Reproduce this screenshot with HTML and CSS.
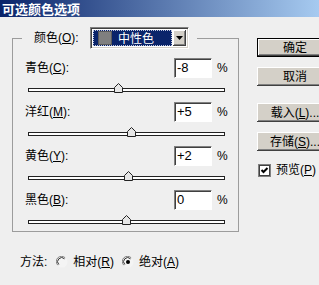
FILE: index.html
```html
<!DOCTYPE html>
<html lang="zh">
<head>
<meta charset="utf-8">
<link rel="stylesheet" href="styles.css">
</head>
<body>
<div class="dialog">
  <div class="titlebar">可选颜色选项</div>
  <div class="main">
    <div class="left">
      <fieldset class="group">
        <legend class="legend">
          <span class="lbl">颜色(<u>O</u>):</span>
          <div class="combo">
            <div class="combo-val"><span class="swatch"></span><span class="combo-text">中性色</span></div>
            <div class="combo-btn"><svg width="7" height="4" viewBox="0 0 7 4"><polygon points="0,0 7,0 3.5,4" fill="#000"/></svg></div>
          </div>
        </legend>
        <div class="rows">
          <div class="row">
            <div class="line"><span class="lbl name">青色(<u>C</u>):</span><div class="num">-8</div><span class="pct">%</span></div>
            <div class="slider"><div class="track"></div><svg class="thumb" style="left:46%" width="9" height="10" viewBox="0 0 9 10"><polygon points="0.5,4.5 4.5,0.5 8.5,4.5 8.5,9.5 0.5,9.5" fill="#e6e6e6" stroke="#222"/></svg></div>
          </div>
          <div class="row">
            <div class="line"><span class="lbl name">洋红(<u>M</u>):</span><div class="num">+5</div><span class="pct">%</span></div>
            <div class="slider"><div class="track"></div><svg class="thumb" style="left:52.5%" width="9" height="10" viewBox="0 0 9 10"><polygon points="0.5,4.5 4.5,0.5 8.5,4.5 8.5,9.5 0.5,9.5" fill="#e6e6e6" stroke="#222"/></svg></div>
          </div>
          <div class="row">
            <div class="line"><span class="lbl name">黄色(<u>Y</u>):</span><div class="num">+2</div><span class="pct">%</span></div>
            <div class="slider"><div class="track"></div><svg class="thumb" style="left:51%" width="9" height="10" viewBox="0 0 9 10"><polygon points="0.5,4.5 4.5,0.5 8.5,4.5 8.5,9.5 0.5,9.5" fill="#e6e6e6" stroke="#222"/></svg></div>
          </div>
          <div class="row">
            <div class="line"><span class="lbl name">黑色(<u>B</u>):</span><div class="num">0</div><span class="pct">%</span></div>
            <div class="slider"><div class="track"></div><svg class="thumb" style="left:50%" width="9" height="10" viewBox="0 0 9 10"><polygon points="0.5,4.5 4.5,0.5 8.5,4.5 8.5,9.5 0.5,9.5" fill="#e6e6e6" stroke="#222"/></svg></div>
          </div>
        </div>
      </fieldset>
      <div class="method">
        <span class="lbl">方法:</span>
        <span class="radio">
          <svg width="12" height="12" viewBox="0 0 12 12"><circle cx="6" cy="6" r="5.5" fill="#f4f4f4"/><path d="M1.8 9.2 A5 5 0 0 1 9.2 1.8" stroke="#808080" fill="none"/><path d="M2.8 8.5 A4 4 0 0 1 8.5 2.8" stroke="#303030" fill="none"/></svg>
          <span class="lbl">相对(<u>R</u>)</span>
        </span>
        <span class="radio">
          <svg width="12" height="12" viewBox="0 0 12 12"><circle cx="6" cy="6" r="5.5" fill="#f4f4f4"/><path d="M1.8 9.2 A5 5 0 0 1 9.2 1.8" stroke="#808080" fill="none"/><path d="M2.8 8.5 A4 4 0 0 1 8.5 2.8" stroke="#303030" fill="none"/><circle cx="6" cy="6" r="2" fill="#000"/></svg>
          <span class="lbl">绝对(<u>A</u>)</span>
        </span>
      </div>
    </div>
    <div class="right">
      <button class="btn default">确定</button>
      <button class="btn b2">取消</button>
      <button class="btn b3">载入(<u>L</u>)...</button>
      <button class="btn b2">存储(<u>S</u>)...</button>
      <div class="check">
        <svg width="13" height="13" viewBox="0 0 13 13"><rect x="0.5" y="0.5" width="12" height="12" fill="#fff" stroke="#808080"/><rect x="1.5" y="1.5" width="10" height="10" fill="none" stroke="#404040"/><polyline points="3.5,6 5.5,8 9.5,4" fill="none" stroke="#000" stroke-width="2"/></svg>
        <span class="lbl">预览(<u>P</u>)</span>
      </div>
    </div>
  </div>
</div>
</body>
</html>
```
FILE: styles.css
```css
* { box-sizing: border-box; }
html, body { margin: 0; padding: 0; }
body {
  width: 319px;
  height: 285px;
  overflow: hidden;
  background: #efefef;
  font-family: "Liberation Sans", "Noto Sans CJK SC", sans-serif;
  font-size: 12px;
  color: #000;
}
.dialog { width: 319px; height: 285px; display: flex; flex-direction: column; }
.titlebar {
  height: 17px;
  background: linear-gradient(to right, #0a246a, #a6caf0);
  color: #fff;
  font-family: "Noto Sans CJK SC", sans-serif;
  font-weight: bold;
  font-size: 13px;
  line-height: 17px;
  padding-left: 2px;
  flex: none;
}
.main { display: flex; flex: 1; }
.left { width: 227px; margin-left: 12px; flex: none; }
.lbl { white-space: nowrap; line-height: 14px; }
.lbl u { text-decoration: underline; }
.group {
  margin: 10px 0 0 0;
  padding: 9px 13px 6px 12px;
  border: 1px solid #9c9c9c;
  min-width: 0;
}
.legend {
  display: flex;
  align-items: center;
  margin-left: -3px;
  padding: 0 8px 0 12px;
  height: 22px;
}
.legend .lbl { width: 56px; }
.combo {
  width: 99px;
  height: 22px;
  display: flex;
  padding: 2px;
  border-top: 1px solid #808080;
  border-left: 1px solid #808080;
  border-bottom: 1px solid #fff;
  border-right: 1px solid #fff;
  box-shadow: inset 1px 1px 0 #404040, inset -1px -1px 0 #d4d0c8;
  background: #fff;
}
.combo-val {
  flex: 1;
  background: #0a246a;
  outline: 1px dotted #c0c8e0;
  outline-offset: -1px;
  display: flex;
  align-items: center;
  margin: 0 1px 0 0;
}
.swatch {
  width: 14px;
  height: 14px;
  background: #7f7f7f;
  border: 1px solid #5a5a5a;
  margin-left: 5px;
}
.combo-text {
  color: #fff;
  margin-left: 6px;
  font-family: "Noto Sans CJK SC", sans-serif;
  line-height: 14px;
}
.combo-btn {
  width: 13px;
  background: #d4d0c8;
  display: flex;
  align-items: center;
  justify-content: center;
  box-shadow: inset -1px -1px 0 #404040, inset 1px 1px 0 #fff, inset -2px -2px 0 #808080;
}
.rows { display: flex; flex-direction: column; gap: 9px; }
.line { display: flex; align-items: center; height: 20px; margin-right: -2px; }
.name { flex: 1; }
.num {
  width: 38px;
  height: 20px;
  background: #fff;
  border-top: 1px solid #808080;
  border-left: 1px solid #808080;
  border-bottom: 1px solid #fff;
  border-right: 1px solid #fff;
  box-shadow: inset 1px 1px 0 #404040;
  padding-left: 2px;
  font-size: 13px;
  line-height: 18px;
}
.pct { width: 10px; margin-left: 5px; text-align: right; }
.slider { position: relative; height: 10px; margin: 5px 0 0 3px; }
.track {
  position: absolute;
  left: 0; right: 0; top: 5px;
  height: 4px;
  background: #fff;
  border: 1px solid #222;
}
.thumb { position: absolute; top: 0; margin-left: -4.5px; display: block; }
.method {
  display: flex;
  align-items: center;
  margin-top: 23px;
  margin-left: 8px;
  height: 14px;
}
.radio { display: flex; align-items: center; gap: 5px; margin-left: 9px; }
.radio + .radio { margin-left: 8px; }
.radio svg { display: block; }
.right {
  margin-left: 18px;
  padding-top: 21px;
  display: flex;
  flex-direction: column;
  flex: none;
  width: 76px;
}
.btn {
  width: 76px;
  height: 19px;
  padding: 0;
  border: none;
  background: #d4d0c8;
  font-family: "Liberation Sans", "Noto Sans CJK SC", sans-serif;
  font-size: 12px;
  color: #000;
  line-height: 14px;
  box-shadow: inset -1px -1px 0 #404040, inset 1px 1px 0 #fff, inset -2px -2px 0 #808080;
}
.btn.default {
  border: 1px solid #000;
  box-shadow: inset -1px -1px 0 #404040, inset 1px 1px 0 #fff, inset -2px -2px 0 #808080;
}
.b2 { margin-top: 10px; }
.b3 { margin-top: 17px; }
.check { display: flex; align-items: center; gap: 5px; margin-top: 12px; margin-left: 1px; }
.check svg { display: block; }
```
